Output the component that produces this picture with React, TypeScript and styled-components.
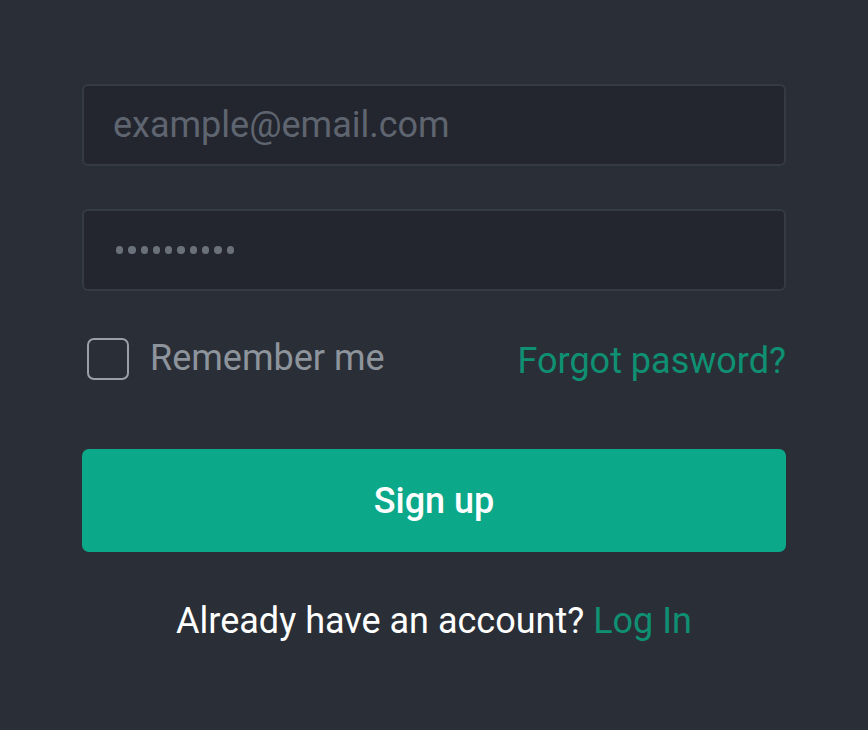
import React from "react";
import styled, { createGlobalStyle } from "styled-components";

const Global = createGlobalStyle`
  html, body { margin: 0; padding: 0; background: #2a2f37; }
  body { font-family: Roboto, "Noto Sans", sans-serif; }
  * { box-sizing: border-box; }
`;

const Page = styled.div`
  width: 868px;
  height: 730px;
  background: #2a2f37;
  padding: 84px 82px 0 82px;
  display: flex;
  flex-direction: column;
`;

const Field = styled.input<{ $gap?: number }>`
  width: 704px;
  height: 82px;
  background: #23262e;
  border: 2px solid #353b44;
  border-radius: 6px;
  padding: 0 29px;
  font-family: Roboto, sans-serif;
  font-size: 36px;
  color: #5f6570;
  outline: none;
  margin-bottom: ${(p) => p.$gap ?? 0}px;
  &::placeholder { color: #5f6570; }
`;

const Dots = styled.div`
  width: 704px;
  height: 82px;
  background: #23262e;
  border: 2px solid #353b44;
  border-radius: 6px;
  padding: 0 31px 0 32px;
  display: flex;
  align-items: center;
  gap: 5px;
`;

const Dot = styled.span`
  width: 7.3px;
  height: 7.3px;
  border-radius: 50%;
  background: #6b717b;
`;

const OptionsRow = styled.div`
  display: flex;
  align-items: center;
  justify-content: space-between;
  margin-top: 47px;
  height: 42px;
`;

const CheckLabel = styled.label`
  display: flex;
  align-items: center;
  gap: 21px;
  padding-left: 5px;
  font-size: 36px;
  color: #8e949c;
`;

const LabelText = styled.span`
  margin-top: -3px;
`;

const Box = styled.span`
  width: 42px;
  height: 42px;
  border: 2px solid #9aa0a8;
  border-radius: 7px;
`;

const Forgot = styled.a`
  font-size: 36px;
  color: #0f9073;
  text-decoration: none;
  margin-top: 3px;
`;

const Button = styled.button`
  margin-top: 69px;
  width: 704px;
  height: 103px;
  background: #0ca88a;
  border: none;
  border-radius: 7px;
  color: #ffffff;
  font-family: Roboto, sans-serif;
  font-weight: 500;
  font-size: 36px;
`;

const Footer = styled.p`
  margin: 48px 0 0 0;
  text-align: center;
  font-size: 36px;
  color: #ffffff;
`;

const Link = styled.span`
  color: #0f9073;
`;

export default function App() {
  return (
    <>
      <Global />
      <Page>
        <Field $gap={43} placeholder="example@email.com" />
        <Dots>
          {Array.from({ length: 10 }).map((_, i) => (
            <Dot key={i} />
          ))}
        </Dots>
        <OptionsRow>
          <CheckLabel>
            <Box />
            <LabelText>Remember me</LabelText>
          </CheckLabel>
          <Forgot>Forgot pasword?</Forgot>
        </OptionsRow>
        <Button>Sign up</Button>
        <Footer>
          Already have an account? <Link>Log In</Link>
        </Footer>
      </Page>
    </>
  );
}
